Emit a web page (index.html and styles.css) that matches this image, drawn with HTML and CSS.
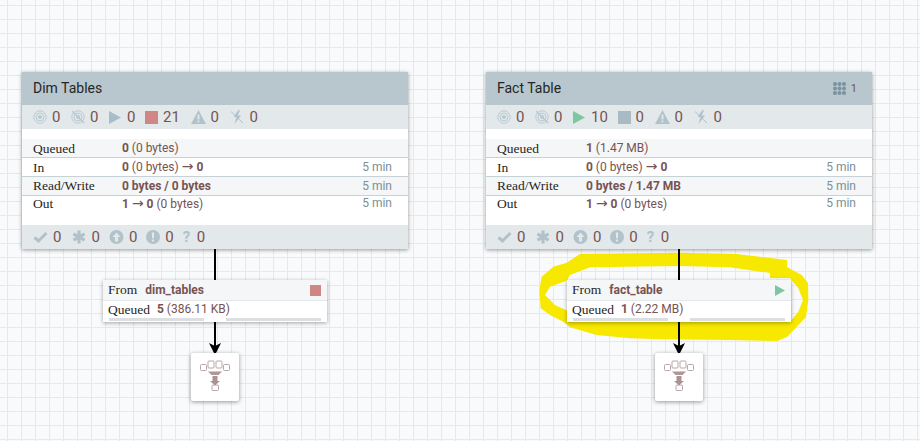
FILE: index.html
```html
<!DOCTYPE html>
<html>
<head lang="en">
  <meta charset="UTF-8">
  <title>Flow canvas</title>
  <link rel="stylesheet" href="styles.css">
</head>
<body>
<svg width="0" height="0" class="defs">
  <symbol id="i-target" viewBox="0 0 14 14"><g fill="none" stroke="#b8c9d1" stroke-width="1"><circle cx="7" cy="7" r="6.2"/><circle cx="7" cy="7" r="4"/></g><circle cx="7" cy="7" r="2" fill="#b8c9d1"/></symbol>
  <symbol id="i-notarget" viewBox="0 0 14 14"><g fill="none" stroke="#b8c9d1" stroke-width="1"><circle cx="7" cy="7" r="6.2"/><circle cx="7" cy="7" r="4"/><path d="M1 1l12 12" stroke-width="1.4"/></g><circle cx="7" cy="7" r="2" fill="#b8c9d1"/></symbol>
  <symbol id="i-play" viewBox="0 0 12 13" preserveAspectRatio="none"><path d="M0 0l12 6.500L0 13z"/></symbol>
  <symbol id="i-warn" viewBox="0 0 15 14"><path d="M7.500 0L15 14H0z" fill="#b2c2ca"/><path d="M6.600 4.500h1.800v5H6.600zM6.600 10.500h1.800v1.800H6.600z" fill="#e3e8eb"/></symbol>
  <symbol id="i-disabled" viewBox="0 0 14 14"><path d="M8.500 0L3.500 7h3L4.500 14l6.500-8.500H7.800L10 0z" fill="#b2c2ca"/><path d="M1 1.500l12 11.500" fill="none" stroke="#b2c2ca" stroke-width="1"/></symbol>
  <symbol id="i-check" viewBox="0 0 15 14"><path d="M1.500 7.500L5.500 11 13.500 3" fill="none" stroke="#b2c2ca" stroke-width="3"/></symbol>
  <symbol id="i-star" viewBox="0 0 14 14"><g stroke="#b2c2ca" stroke-width="3.2"><path d="M7 .5v13M1.400 3.800l11.200 6.400M12.600 3.800L1.400 10.200"/></g></symbol>
  <symbol id="i-up" viewBox="0 0 14 14"><circle cx="7" cy="7" r="7" fill="#b2c2ca"/><path d="M7 2.500L11 7H8.600v4.500H5.400V7H3z" fill="#e3e8eb"/></symbol>
  <symbol id="i-bang" viewBox="0 0 14 14"><circle cx="7" cy="7" r="7" fill="#b2c2ca"/><path d="M5.800 2.500h2.400L7.900 8.200H6.100zM5.900 9.400h2.200v2.200H5.900z" fill="#e3e8eb"/></symbol>
  <symbol id="i-group" viewBox="0 0 13 13"><g fill="#6f8b98"><circle cx="2" cy="2" r="2"/><circle cx="6.500" cy="2" r="2"/><circle cx="11" cy="2" r="2"/><circle cx="2" cy="6.500" r="2"/><circle cx="6.500" cy="6.500" r="2"/><circle cx="11" cy="6.500" r="2"/><circle cx="2" cy="11" r="2"/><circle cx="6.500" cy="11" r="2"/><circle cx="11" cy="11" r="2"/></g></symbol>
  <symbol id="i-funnel" viewBox="0 0 30 31"><g fill="#fff" stroke="#b9a6a6" stroke-width="1"><rect x="0.500" y="4.500" width="6" height="6" rx="1"/><rect x="23.500" y="4.500" width="6" height="6" rx="1"/><rect x="8" y="1" width="6" height="7" rx="1"/><rect x="16" y="1" width="6" height="7" rx="1"/><rect x="12" y="25" width="6.500" height="5.500" rx="1"/></g><path d="M8 11.500h14l-3.500 3.500h-7z" fill="#ad9897"/><path d="M12.500 16h5v5H20l-5 4.500-5-4.500h2.500z" fill="#aa9492"/></symbol>
  <symbol id="i-arrow" viewBox="0 0 12 12"><path d="M0 0l6 3 6-3-6 12z" fill="#000"/></symbol>
</svg>

<div class="canvas">
  <svg class="marker" width="290" height="170" viewBox="0 0 870 510"><path fill="#f7e800" fill-rule="evenodd" d="M150 42L450 38 620 42 771 60 771 81 815 105 834 129 835 180 828 231 771 291 741 303 600 300 400 298 300 295 200 285 120 262 100 245 60 225 32 205 28 150 35 110 70 80 110 68ZM180 82L450 78 600 82 720 99 720 114 780 114 805 145 819 180 805 215 780 246 600 240 450 240 300 240 200 240 112 235 112 212 75 195 45 165 60 140 110 122 120 105Z"/></svg>

  <i class="link link-dim"></i>
  <i class="link link-fact"></i>
  <svg class="head head-dim"><use href="#i-arrow"/></svg>
  <svg class="head head-fact"><use href="#i-arrow"/></svg>

  <section class="group group-dim">
    <header class="group-title">Dim Tables</header>
    <div class="stats">
      <span class="stat"><svg class="ic"><use href="#i-target"/></svg>0</span>
      <span class="stat"><svg class="ic"><use href="#i-notarget"/></svg>0</span>
      <span class="stat"><svg class="ic-play play-off"><use href="#i-play"/></svg>0</span>
      <span class="stat stat-stop"><b class="stop stop-on"></b>21</span>
      <span class="stat"><svg class="ic ic-warn"><use href="#i-warn"/></svg>0</span>
      <span class="stat stat-last"><svg class="ic"><use href="#i-disabled"/></svg>0</span>
    </div>
    <div class="rows">
      <div class="row"><span class="label">Queued</span><span class="val"><b>0</b> (0 bytes)</span></div>
      <div class="row"><span class="label">In</span><span class="val"><b>0</b> (0 bytes) <span class="arrow">→</span> <b>0</b></span><span class="age">5 min</span></div>
      <div class="row"><span class="label">Read/Write</span><span class="val"><b>0 bytes / 0 bytes</b></span><span class="age">5 min</span></div>
      <div class="row"><span class="label">Out</span><span class="val"><b>1</b> <span class="arrow">→</span> <b>0</b> (0 bytes)</span><span class="age">5 min</span></div>
    </div>
    <div class="foot">
      <span class="stat"><svg class="ic ic-check"><use href="#i-check"/></svg>0</span>
      <span class="stat"><svg class="ic"><use href="#i-star"/></svg>0</span>
      <span class="stat"><svg class="ic ic-check"><use href="#i-up"/></svg>0</span>
      <span class="stat"><svg class="ic"><use href="#i-bang"/></svg>0</span>
      <span class="stat"><em class="qm">?</em>0</span>
    </div>
  </section>

  <section class="group group-fact">
    <header class="group-title">Fact Table<span class="vers"><svg class="ic-group"><use href="#i-group"/></svg>1</span></header>
    <div class="stats">
      <span class="stat"><svg class="ic"><use href="#i-target"/></svg>0</span>
      <span class="stat"><svg class="ic"><use href="#i-notarget"/></svg>0</span>
      <span class="stat"><svg class="ic-play play-on"><use href="#i-play"/></svg>10</span>
      <span class="stat stat-stop"><b class="stop"></b>0</span>
      <span class="stat"><svg class="ic ic-warn"><use href="#i-warn"/></svg>0</span>
      <span class="stat stat-last"><svg class="ic"><use href="#i-disabled"/></svg>0</span>
    </div>
    <div class="rows">
      <div class="row"><span class="label">Queued</span><span class="val"><b>1</b> (1.47 MB)</span></div>
      <div class="row"><span class="label">In</span><span class="val"><b>0</b> (0 bytes) <span class="arrow">→</span> <b>0</b></span><span class="age">5 min</span></div>
      <div class="row"><span class="label">Read/Write</span><span class="val"><b>0 bytes / 1.47 MB</b></span><span class="age">5 min</span></div>
      <div class="row"><span class="label">Out</span><span class="val"><b>1</b> <span class="arrow">→</span> <b>0</b> (0 bytes)</span><span class="age">5 min</span></div>
    </div>
    <div class="foot">
      <span class="stat"><svg class="ic ic-check"><use href="#i-check"/></svg>0</span>
      <span class="stat"><svg class="ic"><use href="#i-star"/></svg>0</span>
      <span class="stat"><svg class="ic ic-check"><use href="#i-up"/></svg>0</span>
      <span class="stat"><svg class="ic"><use href="#i-bang"/></svg>0</span>
      <span class="stat"><em class="qm">?</em>0</span>
    </div>
  </section>

  <div class="port port-dim">
    <div class="port-top"><span class="label">From</span><b class="port-name">dim_tables</b><b class="stop stop-on stop-small"></b></div>
    <div class="port-bottom"><span class="label">Queued</span><span class="val"><b>5</b> (386.11 KB)</span></div>
    <div class="bars"><i class="bar"></i><i class="bar"></i></div>
  </div>

  <div class="port port-fact">
    <div class="port-top"><span class="label">From</span><b class="port-name">fact_table</b><svg class="ic-small play-on"><use href="#i-play"/></svg></div>
    <div class="port-bottom"><span class="label">Queued</span><span class="val"><b>1</b> (2.22 MB)</span></div>
    <div class="bars"><i class="bar"></i><i class="bar"></i></div>
  </div>

  <div class="funnel funnel-dim"><svg class="funnel-ic"><use href="#i-funnel"/></svg></div>
  <div class="funnel funnel-fact"><svg class="funnel-ic"><use href="#i-funnel"/></svg></div>
</div>
</body>
</html>
```

FILE: styles.css
```css
html, body {
  margin: 0;
  height: 100%;
  overflow: hidden;
}

.defs {
  position: absolute;
}

.canvas {
  position: relative;
  width: 920px;
  height: 441px;
  background-color: #f9fafb;
  background-image:
    linear-gradient(to right, #e6e9ec 1px, transparent 1px),
    linear-gradient(to bottom, #e6e9ec 1px, transparent 1px);
  background-size: 14px 14px;
  background-position: 7px 5px;
  font-family: Roboto, "Liberation Sans", sans-serif;
  color: #775351;
}

.marker {
  position: absolute;
  left: 530px;
  top: 240px;
}

/* nodes sit on the free canvas */
.group {
  position: absolute;
  top: 72px;
  width: 386px;
  height: 177px;
  display: flex;
  flex-direction: column;
  background: #fff;
  box-shadow: 0 1px 4px rgba(0, 0, 0, 0.4);
}

.group-dim {
  left: 22px;
}

.group-fact {
  left: 486px;
}

.group-title {
  height: 33px;
  line-height: 33px;
  padding: 0 15px 0 11px;
  display: flex;
  justify-content: space-between;
  background: #b8c6cd;
  color: #262626;
  font-size: 14px;
}

.vers {
  display: flex;
  align-items: center;
  gap: 5px;
  font-size: 11px;
  color: #775351;
}

.ic-group {
  width: 13px;
  height: 13px;
  opacity: 0.85;
}

.stats, .foot {
  height: 24px;
  display: flex;
  align-items: center;
  padding-left: 11px;
  background: #e3e8eb;
  font-size: 15px;
}

.stats {
  gap: 10.6px;
  margin-bottom: 10px;
}

.foot {
  gap: 9px;
  margin-top: auto;
}

.foot .stat:nth-child(2) {
  margin-left: 2px;
}

.stat {
  display: flex;
  align-items: center;
  gap: 5px;
}

.stat-stop {
  margin-left: -1px;
}

.stat-last {
  gap: 6px;
}

.ic {
  width: 14px;
  height: 14px;
  flex: none;
}

.ic-warn, .ic-check {
  width: 15px;
}

.ic-play {
  width: 12px;
  height: 13px;
  margin-right: 1px;
}

.play-off {
  fill: #a9bdc6;
}

.play-on {
  fill: #7dc7a0;
}

.stop {
  width: 13px;
  height: 13px;
  background: #a8bbc4;
}

.stop-on {
  background: #d18686;
}

.stop-small {
  width: 11px;
  height: 11px;
  margin-left: auto;
}

.qm {
  width: 9px;
  font-style: normal;
  font-weight: 700;
  color: #b2c2ca;
}

.row {
  height: 18px;
  line-height: 19px;
  padding: 0 16px 0 11px;
  display: flex;
  font-size: 12px;
  border-bottom: 1px solid #c7d2d7;
}

.row:nth-child(odd) {
  background: #f4f6f7;
}

.row:nth-child(3) {
  line-height: 18px;
}

.row:last-child {
  line-height: 15px;
  border-bottom: 0;
}

.label {
  font-family: "Liberation Serif", serif;
  font-size: 13.5px;
  color: #262626;
}

.row .label {
  width: 89px;
}

.arrow {
  font-family: "DejaVu Sans", sans-serif;
  font-size: 14px;
  line-height: 1;
}

.age {
  margin-left: auto;
  color: #7a8f99;
  font-size: 12px;
}

.port {
  position: absolute;
  top: 280px;
  width: 224px;
  height: 42px;
  background: #fff;
  box-shadow: 0 1px 4px rgba(0, 0, 0, 0.35);
}

.port-dim {
  left: 103px;
}

.port-fact {
  left: 567px;
}

.port-top {
  height: 20px;
  padding: 0 6px 0 5px;
  display: flex;
  align-items: center;
  gap: 8px;
  background: #f4f6f7;
  border-bottom: 1px solid #e3e8eb;
}

.port-name {
  font-size: 12px;
}

.ic-small {
  width: 10px;
  height: 11px;
  margin-left: auto;
}

.port-bottom {
  height: 17px;
  line-height: 17px;
  padding: 0 5px;
  display: flex;
  gap: 7px;
  font-size: 12px;
}

.bars {
  display: flex;
  justify-content: space-between;
  padding: 0 6px;
}

.bar {
  width: 95px;
  height: 3px;
  background: #dbdfe1;
}

.link {
  position: absolute;
  width: 2px;
  background: #000;
}

.link-dim {
  left: 214px;
  top: 249px;
  height: 100px;
}

.link-fact {
  left: 678px;
  top: 249px;
  height: 100px;
}

.head {
  position: absolute;
  top: 343px;
  width: 12px;
  height: 12px;
}

.head-dim {
  left: 209px;
}

.head-fact {
  left: 673px;
}

.funnel {
  position: absolute;
  top: 353px;
  width: 48px;
  height: 48px;
  display: flex;
  align-items: center;
  justify-content: center;
  padding-bottom: 3px;
  box-sizing: border-box;
  background: #fff;
  border-radius: 2px;
  box-shadow: 0 1px 4px rgba(0, 0, 0, 0.4);
}

.funnel-dim {
  left: 191px;
}

.funnel-fact {
  left: 655px;
}

.funnel-ic {
  width: 30px;
  height: 31px;
}
```
